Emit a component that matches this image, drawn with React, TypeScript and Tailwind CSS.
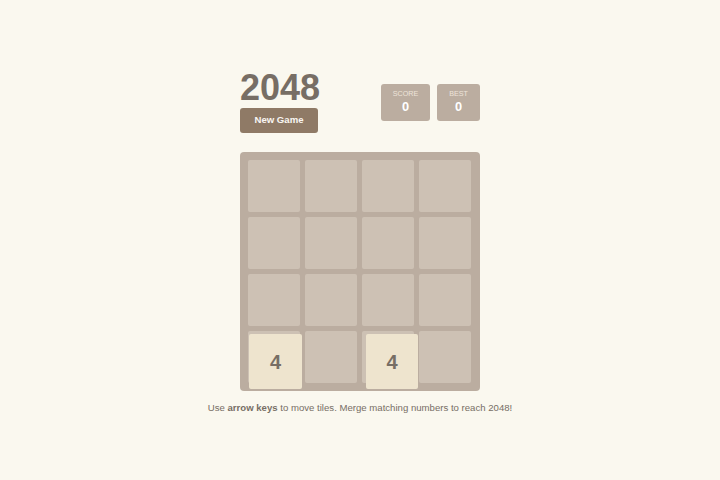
import React from "react";

const cells = Array.from({ length: 16 }, (_, i) => i);

export default function App() {
  return (
    <div
      className="min-h-screen w-full bg-[#faf8ef] flex flex-col items-center pt-[70px]"
      style={{ fontFamily: '"Liberation Sans", Arial, sans-serif' }}
    >
      <div className="w-[240px]">
        <div className="flex justify-between items-start">
          <div className="flex flex-col items-start">
            <h1 className="text-[36px] leading-[36px] font-bold text-[#776e65] m-0">2048</h1>
            <button className="mt-[2px] h-[25px] w-[78px] rounded-[3px] bg-[#8f7a66] text-[9.6px] font-bold text-[#f9f6f2]">
              New Game
            </button>
          </div>
          <div className="flex gap-[7px] mt-[14px]">
            <div className="bg-[#bbada0] rounded-[3px] px-3 pt-[5px] pb-[7px] flex flex-col items-center">
              <div className="text-[7.2px] leading-[10px] text-[#eee4da] uppercase">Score</div>
              <div className="text-[12.8px] leading-[15px] font-bold text-white">0</div>
            </div>
            <div className="bg-[#bbada0] rounded-[3px] px-3 pt-[5px] pb-[7px] flex flex-col items-center">
              <div className="text-[7.2px] leading-[10px] text-[#eee4da] uppercase">Best</div>
              <div className="text-[12.8px] leading-[15px] font-bold text-white">0</div>
            </div>
          </div>
        </div>

        <div className="relative mt-[19px] w-[240px] bg-[#bbada0] rounded-[4px] p-2">
          <div className="grid grid-cols-[repeat(4,52px)] grid-rows-[repeat(4,52px)] gap-[5px]">
            {cells.map((i) => (
              <div key={i} className="bg-[#cdc1b4] rounded-[2px]" />
            ))}
          </div>
          <div className="absolute left-[9px] top-[182px] w-[53px] h-[55px] bg-[#eee4ce] rounded-[2px] flex items-center justify-center text-[20px] font-bold text-[#776e65]">
            4
          </div>
          <div className="absolute left-[126px] top-[182px] w-[52px] h-[55px] bg-[#eee4ce] rounded-[2px] flex items-center justify-center text-[20px] font-bold text-[#776e65]">
            4
          </div>
        </div>
      </div>
      <p className="mt-[11px] text-[9.6px] leading-[12px] text-[#776e65] text-center">
        Use <b className="font-bold">arrow keys</b> to move tiles. Merge matching numbers to reach 2048!
      </p>
    </div>
  );
}
